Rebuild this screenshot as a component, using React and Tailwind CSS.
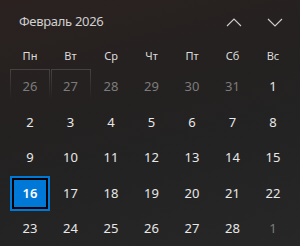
import React from "react";

const dayNames = ["Пн", "Вт", "Ср", "Чт", "Пт", "Сб", "Вс"];

const buildDays = () => {
  const days = [];
  [26, 27, 28, 29, 30, 31].forEach((d) => days.push({ d, other: true }));
  for (let d = 1; d <= 28; d++) days.push({ d, other: false });
  days.push({ d: 1, other: true });
  return days;
};

const Chevron = ({ up }) => (
  <svg width="16" height="9" viewBox="0 0 16 9" fill="none">
    <polyline
      points={up ? "1,8 8,1 15,8" : "1,1 8,8 15,1"}
      stroke="#cfcfcf"
      strokeWidth="1.1"
    />
  </svg>
);

const DayCell = ({ day, index }) => {
  const isToday = !day.other && day.d === 16;
  const revealed = index === 0 || index === 1;

  if (isToday) {
    return (
      <div className="flex items-center justify-center bg-[#0078d7] border-2 border-[#0078d7] shadow-[inset_0_0_0_2px_#000] text-white text-[13px] font-semibold">
        {day.d}
      </div>
    );
  }

  return (
    <div
      className={
        "flex items-center justify-center text-[13px] " +
        (day.other ? "text-[#7c7c7c] " : "text-[#e8e8e8] ") +
        (revealed
          ? "border border-solid [border-image:linear-gradient(to_bottom,rgba(255,255,255,0.15),rgba(255,255,255,0)_85%)_1]"
          : "")
      }
    >
      {day.d}
    </div>
  );
};

export default function App() {
  const days = buildDays();

  return (
    <div
      className="w-[300px] h-[246px] overflow-hidden bg-[linear-gradient(165deg,#2b2220_0%,#242120_35%,#232323_65%,#272727_100%)]"
      style={{ fontFamily: '"Noto Sans", "Open Sans", sans-serif' }}
    >
      <div className="h-[44px] flex items-center pl-[19px]">
        <span className="text-[13px] tracking-[-0.3px] text-[#d0d0d0] flex-1">Февраль 2026</span>
        <div className="flex items-center">
          <button className="w-[41px] h-[30px] flex items-center justify-center">
            <Chevron up />
          </button>
          <button className="w-[41px] h-[30px] flex items-center justify-center mr-[5px]">
            <Chevron />
          </button>
        </div>
      </div>

      <div className="ml-[10px] grid grid-cols-[repeat(7,40px)] gap-x-[0.5px] h-[25px] items-center">
        {dayNames.map((n) => (
          <div key={n} className="text-center text-[11px] text-[#dcdcdc]">
            {n}
          </div>
        ))}
      </div>

      <div className="ml-[10px] grid grid-cols-[repeat(7,40px)] gap-x-[0.5px] auto-rows-[35.5px]">
        {days.map((day, i) => (
          <DayCell key={i} day={day} index={i} />
        ))}
      </div>
    </div>
  );
}
